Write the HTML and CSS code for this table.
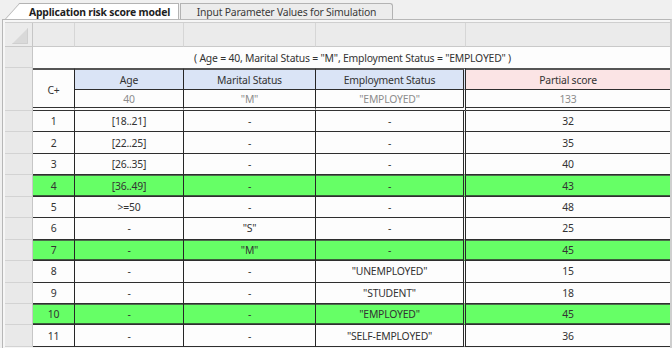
FILE: index.html
```html
<!DOCTYPE html>
<html>
<head>
<meta charset="utf-8">
<link rel="stylesheet" href="styles.css">
</head>
<body>
<div class="tabs">
  <div class="tab tab-active">Application risk score model</div>
  <div class="tab tab-idle">Input Parameter Values for Simulation</div>
</div>
<div class="pane">
  <div class="sheet">
    <div class="ch corner"><svg class="corner-mark" width="16" height="16" viewBox="0 0 16 16"><polygon points="0,16 16,16 16,0" fill="#d9d9d9"/><polyline points="0.5,15.5 15.5,15.5 15.5,0.5" fill="none" stroke="#cfcfcf"/></svg></div>
    <div class="ch"></div>
    <div class="ch"></div>
    <div class="ch"></div>
    <div class="ch"></div>
    <div class="ch ch-last"></div>

    <div class="gut"></div>
    <div class="title">( Age = 40, Marital Status = "M", Employment Status = "EMPLOYED" )</div>

    <div class="gut gut-head"></div>
    <div class="cell cplus">C+</div>
    <div class="cell hd in">Age</div>
    <div class="cell hd in">Marital Status</div>
    <div class="cell hd in emp">Employment Status</div>
    <div class="cell hd out">Partial score</div>
    <div class="cell sub">40</div>
    <div class="cell sub">"M"</div>
    <div class="cell sub emp">"EMPLOYED"</div>
    <div class="cell sub out-sub">133</div>

    <div class="gut"></div><div class="cell">1</div><div class="cell">[18..21]</div><div class="cell">-</div><div class="cell emp">-</div><div class="cell last">32</div>
    <div class="gut"></div><div class="cell">2</div><div class="cell">[22..25]</div><div class="cell">-</div><div class="cell emp">-</div><div class="cell last">35</div>
    <div class="gut"></div><div class="cell">3</div><div class="cell">[26..35]</div><div class="cell">-</div><div class="cell emp">-</div><div class="cell last">40</div>
    <div class="gut"></div><div class="cell hit">4</div><div class="cell hit">[36..49]</div><div class="cell hit">-</div><div class="cell hit emp">-</div><div class="cell hit last">43</div>
    <div class="gut"></div><div class="cell">5</div><div class="cell">&gt;=50</div><div class="cell">-</div><div class="cell emp">-</div><div class="cell last">48</div>
    <div class="gut"></div><div class="cell">6</div><div class="cell">-</div><div class="cell">"S"</div><div class="cell emp">-</div><div class="cell last">25</div>
    <div class="gut"></div><div class="cell hit">7</div><div class="cell hit">-</div><div class="cell hit">"M"</div><div class="cell hit emp">-</div><div class="cell hit last">45</div>
    <div class="gut"></div><div class="cell">8</div><div class="cell">-</div><div class="cell">-</div><div class="cell emp">"UNEMPLOYED"</div><div class="cell last">15</div>
    <div class="gut"></div><div class="cell">9</div><div class="cell">-</div><div class="cell">-</div><div class="cell emp">"STUDENT"</div><div class="cell last">18</div>
    <div class="gut"></div><div class="cell hit">10</div><div class="cell hit">-</div><div class="cell hit">-</div><div class="cell hit emp">"EMPLOYED"</div><div class="cell hit last">45</div>
    <div class="gut"></div><div class="cell">11</div><div class="cell">-</div><div class="cell">-</div><div class="cell emp">"SELF-EMPLOYED"</div><div class="cell last">36</div>
  </div>
</div>
</body>
</html>
```

FILE: styles.css
```css
html, body {
  margin: 0;
  padding: 0;
}
body {
  width: 672px;
  height: 348px;
  overflow: hidden;
  background: #f0f0f0;
  font-family: "Noto Sans", "Open Sans", sans-serif;
  font-size: 10.4px;
  letter-spacing: -0.2px;
  color: #333;
}

.tabs {
  display: flex;
  align-items: flex-end;
  height: 19px;
}
.tab {
  box-sizing: border-box;
  height: 16px;
  padding-top: 1px;
  line-height: 14px;
  text-align: center;
  white-space: nowrap;
  border-top: 1px solid #b3b3b3;
  border-right: 1px solid #b3b3b3;
}
.tab-active {
  position: relative;
  margin-left: 21px;
  width: 158px;
  background: #fff;
  font-weight: bold;
  color: #1e1e1e;
}
.tab-active::before {
  content: "";
  position: absolute;
  left: -16px;
  top: -1px;
  bottom: 0;
  width: 30px;
  background: #fff;
  border-left: 1px solid #b3b3b3;
  border-top: 1px solid #b3b3b3;
  transform-origin: bottom left;
  transform: skewX(-42deg);
  z-index: -1;
}
.tab-idle {
  margin-left: 1px;
  width: 213px;
  background: #ececec;
  border-left: 1px solid #b3b3b3;
  border-top-right-radius: 3px;
  color: #3a3a3a;
}

.pane {
  box-sizing: border-box;
  margin-left: 2px;
  height: 329px;
  border-top: 1px solid #b7b7b7;
  border-left: 1px solid #b7b7b7;
  border-right: 2px solid #cfcfcf;
  padding: 2px 0 0 2px;
  background: #f6f6f6;
  overflow: hidden;
}

.sheet {
  display: grid;
  grid-template-columns: 28px 42px 109px 132px 150px 204px;
  grid-template-rows: 24px 21px 22px 21px;
  grid-auto-rows: 21.45px;
  border-top: 1px solid #cfcfcf;
  background: #fdfdfd;
}

.ch {
  box-sizing: border-box;
  background: #ebebeb;
  border-right: 1px solid #d6d6d6;
  border-bottom: 1px solid #c9c9c9;
}
.ch-last { border-right: none; }
.corner {
  display: flex;
  align-items: flex-end;
  justify-content: flex-end;
  padding: 0 4px 2px 0;
  border-right: 1px solid #c6c6c6;
}

.gut {
  box-sizing: border-box;
  background: #e9e9e9;
  border-right: 1px solid #c6c6c6;
  border-bottom: 1px solid #d3d3d3;
}
.gut-head {
  grid-row: span 2;
}

.title {
  grid-column: 2 / span 5;
  display: flex;
  align-items: center;
  justify-content: center;
  padding-left: 2px;
  background: #fdfdfd;
  color: #333;
  white-space: nowrap;
}

.cell {
  box-sizing: border-box;
  display: flex;
  align-items: center;
  justify-content: center;
  white-space: nowrap;
  border-right: 1px solid #262626;
  border-bottom: 1px solid #2e2e2e;
  color: #333;
  background: #fdfdfd;
}
.cell.emp {
  border-right: 3px double #2a2a2a;
}
.cell.last {
  border-right: none;
}
.cplus {
  grid-row: span 2;
  border-top: 2px solid #555;
  border-bottom: 4px double #333;
  padding-top: 2px;
}
.hd {
  border-top: 2px solid #555;
}
.in {
  background: #dae4f6;
}
.out {
  background: #fbe4e5;
  border-right: none;
}
.sub {
  color: #8c8c8c;
  border-bottom: 4px double #333;
}
.out-sub {
  border-right: none;
}
.hit {
  background: #66ff66;
  box-shadow: inset 0 1px 0 #4b6e4b, inset 0 -1px 0 #3b5f3b;
}
```
